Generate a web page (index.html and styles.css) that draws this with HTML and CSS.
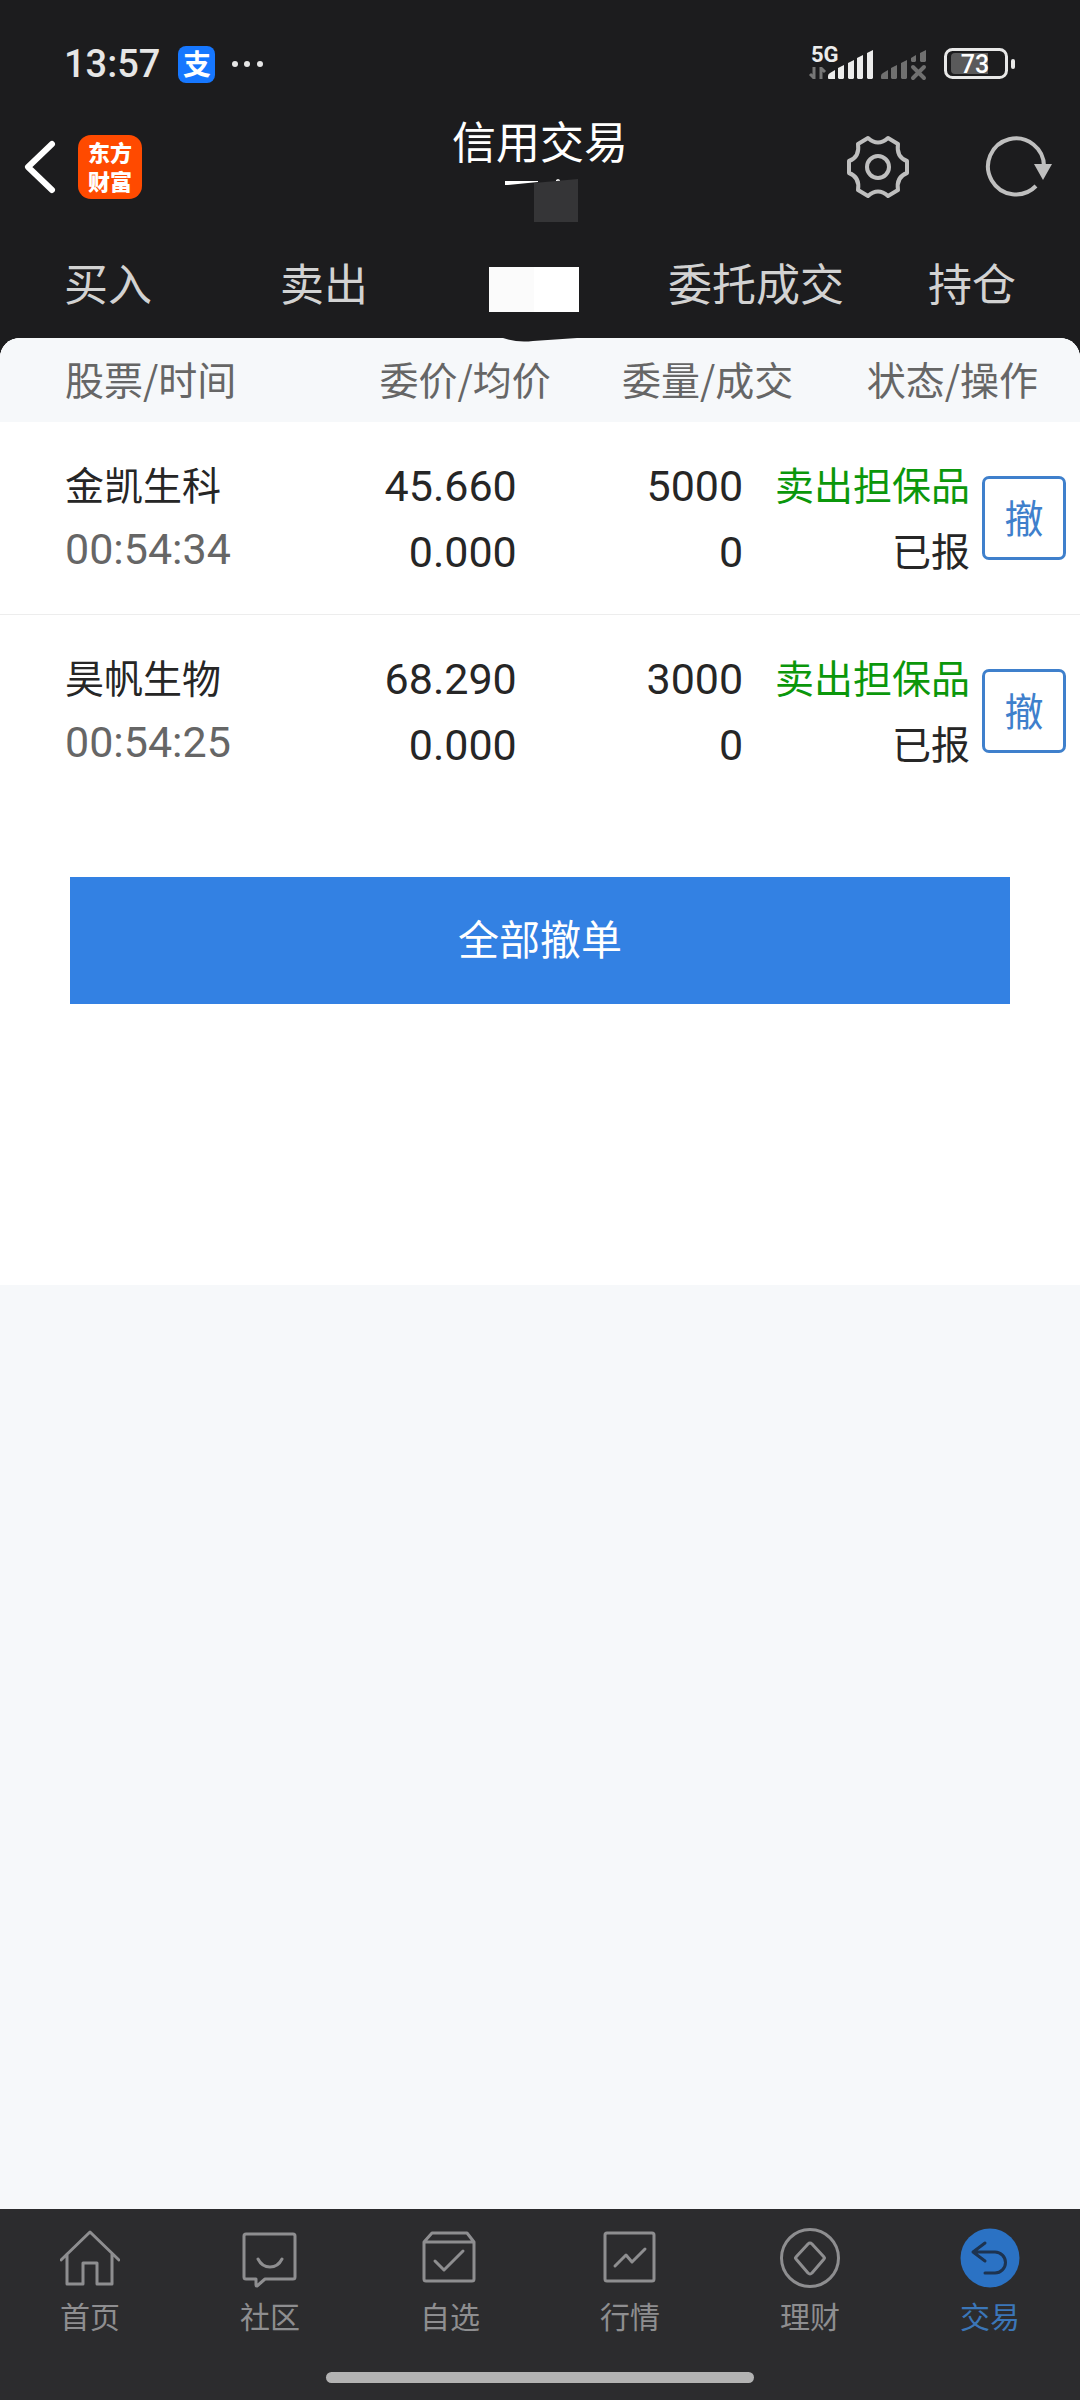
FILE: index.html
```
<!DOCTYPE html>
<html lang="zh">
<head>
  <meta charset="UTF-8">
  <meta name="viewport" content="width=device-width, initial-scale=1">
  <title>信用交易</title>
  <link rel="stylesheet" href="styles.css">
</head>
<body>
<header class="header">
  <div class="status-bar">
    <span class="time">13:57</span>
    <span class="alipay">支</span>
    <svg class="dots" width="32" height="8" viewBox="0 0 32 8" fill="#e6e6e6">
      <circle cx="4" cy="4" r="3"/><circle cx="16" cy="4" r="3"/><circle cx="29" cy="4" r="3"/>
    </svg>
    <svg class="signals" width="210" height="42" viewBox="0 0 210 42">
      <text class="net" x="3" y="19">5G</text>
      <path d="M6 24v12M6 35L2 31M13 36V24M13 25l4 4" fill="none" stroke="#777" stroke-width="3"/>
      <g fill="#ececec">
        <path d="M20 33q0-2 2-3l5-3v9h-6q-1 0-1-1z"/>
        <path d="M30 25l6-3v13l-1 1h-4l-1-1z"/>
        <path d="M40 20l6-3v18l-1 1h-4l-1-1z"/>
        <path d="M49 15l6-3v23l-1 1h-4l-1-1z"/>
        <path d="M59 10l6-3v28l-1 1h-4l-1-1z"/>
      </g>
      <g fill="#707070">
        <path d="M73 33q0-2 2-3l5-3v9h-6q-1 0-1-1z"/>
        <path d="M83 25l6-3v13l-1 1h-4l-1-1z"/>
        <path d="M93 20l6-3v18l-1 1h-4l-1-1z"/>
        <path d="M103 15l5-3v6l-1 1h-3l-1-1z"/>
        <path d="M112 10l6-3v11l-1 1h-4l-1-1z"/>
      </g>
      <path d="M105 24l11 11M116 24l-11 11" stroke="#707070" stroke-width="4" stroke-linecap="round"/>
      <rect x="137.500" y="6.500" width="61" height="28" rx="7" fill="none" stroke="#e8e8e8" stroke-width="3"/>
      <path d="M147 10h33v21h-33q-4 0-4-4v-13q0-4 4-4z" fill="#5a5a5b"/>
      <rect x="203" y="16" width="4" height="10" rx="2" fill="#e8e8e8"/>
      <text class="battery" x="167" y="30">73</text>
    </svg>
  </div>

  <div class="title-bar">
    <div class="left">
      <button class="icon-btn" aria-label="返回">
        <svg width="34" height="56" viewBox="0 0 34 56" fill="none" stroke="#fff" stroke-width="6" stroke-linejoin="round" stroke-linecap="round">
          <path d="M29 5L5 28l24 23"/>
        </svg>
      </button>
      <a class="logo" href="#">东方<br>财富</a>
    </div>
    <div class="title">
      <h1>信用交易</h1>
      <svg width="80" height="48" viewBox="0 0 80 48">
        <path d="M5 5h33v1L8 9H5zM56 4l2-1 2 1v1h-4z" fill="#fff"/>
        <path d="M34 7l44-4v43H34z" fill="#353537"/>
      </svg>
    </div>
    <div class="right">
      <button class="icon-btn" aria-label="设置">
        <svg width="64" height="64" viewBox="0 0 64 64" fill="none" stroke="#bfbfbf" stroke-width="4" stroke-linejoin="round">
          <path d="M22 3Q32 12 42 3L52 9Q50 22 61 26V38Q50 42 52 55L42 61Q32 52 22 61L12 55Q14 42 3 38V26Q14 22 12 9Z"/>
          <circle cx="32" cy="32" r="11"/>
        </svg>
      </button>
      <button class="icon-btn" aria-label="刷新">
        <svg width="70" height="64" viewBox="0 0 70 64" fill="none" stroke="#bfbfbf" stroke-width="4">
          <path d="M60 32A28 28 0 1 0 52 51"/>
          <path d="M50 29h18l-9 16z" fill="#bfbfbf" stroke="none"/>
        </svg>
      </button>
    </div>
  </div>

  <nav class="tabs">
    <a href="#">买入</a>
    <a href="#">卖出</a>
    <a href="#" class="current" aria-label="撤单">
      <svg width="102" height="45" viewBox="0 0 102 45">
        <path d="M0 0h45v45H0z" fill="#fbfbfb"/>
        <path d="M45 0h45v45H45z" fill="#fff"/>
      </svg>
      <svg class="bump" width="74" height="5" viewBox="0 0 74 5">
        <path d="M0 0Q14 5 30 3L74 0z" fill="#1c1c1e"/>
      </svg>
    </a>
    <a href="#">委托成交</a>
    <a href="#">持仓</a>
  </nav>
</header>

<main class="content">
  <section class="orders">
    <table>
      <colgroup>
        <col class="c-name"><col class="c-price"><col class="c-qty"><col class="c-gap"><col class="c-state"><col class="c-action">
      </colgroup>
      <thead>
        <tr>
          <th class="name">股票/时间</th>
          <th>委价/均价</th>
          <th colspan="2" class="amount">委量/成交</th>
          <th colspan="2" class="last">状态/操作</th>
        </tr>
      </thead>
      <tbody>
        <tr>
          <td class="name">金凯生科<span class="num date">00:54:34</span></td>
          <td class="num price">45.660<br>0.000</td>
          <td class="num qty">5000<br>0</td>
          <td colspan="2" class="state"><span class="sell">卖出担保品</span><br>已报</td>
          <td class="action"><button class="cancel">撤</button></td>
        </tr>
        <tr>
          <td class="name">昊帆生物<span class="num date">00:54:25</span></td>
          <td class="num price">68.290<br>0.000</td>
          <td class="num qty">3000<br>0</td>
          <td colspan="2" class="state"><span class="sell">卖出担保品</span><br>已报</td>
          <td class="action"><button class="cancel">撤</button></td>
        </tr>
      </tbody>
    </table>
    <button class="cancel-all">全部撤单</button>
  </section>
</main>

<footer class="footer">
  <nav class="bottom-nav">
    <a href="#">
      <svg viewBox="0 0 60 60"><path d="M1 32L30 4l29 28M7 26v30h16V35h14v21h15V26"/></svg>
      首页
    </a>
    <a href="#">
      <svg viewBox="0 0 60 60"><path d="M6 6h47q2 0 2 2v41q0 2-2 2H25l-8 7q-1 0-1-1v-6H6q-2 0-2-2V8q0-2 2-2zM18 31q4 8 12 8t12-8"/></svg>
      社区
    </a>
    <a href="#">
      <svg viewBox="0 0 60 60"><path d="M4 14h50v37q0 2-2 2H6q-2 0-2-2V14l8-9h35l7 9M15 33l9 9 19-19"/></svg>
      自选
    </a>
    <a href="#">
      <svg viewBox="0 0 60 60"><rect x="5" y="5" width="49" height="48" rx="2"/><path d="M15 38l11-11 6 7 13-13"/></svg>
      行情
    </a>
    <a href="#">
      <svg viewBox="0 0 60 60"><circle cx="30" cy="30" r="28.500"/><path d="M28 16q2-2 4 0l12 13q1 1 0 2L32 45q-2 2-4 0L16 31q-1-1 0-2z"/></svg>
      理财
    </a>
    <a href="#" class="active">
      <svg viewBox="0 0 60 60"><circle cx="30" cy="30" r="29.500" fill="#2b72c4" stroke="none"/><path d="M25 15l-12 9 12 9M13 24h22a10 10 0 0 1 0 21H25" stroke="#1d3350"/></svg>
      交易
    </a>
  </nav>
  <div class="home-bar"></div>
</footer>
</body>
</html>
```
FILE: styles.css
```
* { box-sizing: border-box; }
body { margin: 0; min-height: 100vh; display: flex; flex-direction: column; background: #f6f8fa; font-family: "Noto Sans CJK SC", sans-serif; color: #262626; }
a { text-decoration: none; color: inherit; }
button { font-family: inherit; cursor: pointer; }
svg { display: block; }

.header { background: #1c1c1e; padding-bottom: 20px; }
.status-bar { height: 118px; padding: 10px 62px 0 64px; display: flex; align-items: center; color: #e6e6e6; }
.time { font: 500 38px/48px Roboto, sans-serif; }
.alipay { width: 37px; height: 37px; margin-left: 18px; border-radius: 8px; background: #1677ff; color: #fff; font-size: 28px; font-weight: bold; line-height: 34px; text-align: center; }
.dots { margin-left: 16px; }
.signals { margin-left: auto; }
.net { font: 700 22px Roboto, sans-serif; fill: #ececec; }
.battery { font: 500 25px Roboto, sans-serif; fill: #fff; text-anchor: middle; }

.title-bar { height: 108px; display: grid; grid-template-columns: 1fr auto 1fr; }
.left, .right { display: flex; align-items: center; padding-bottom: 10px; }
.left { padding-left: 23px; gap: 21px; }
.right { justify-content: flex-end; padding-right: 26px; gap: 74px; }
.icon-btn { padding: 0; border: 0; background: none; }
.logo { width: 64px; height: 64px; padding-top: 2px; border-radius: 13px; background: #ff4a00; color: #fff; font-size: 22px; font-weight: 900; line-height: 29px; text-align: center; }
.title h1 { margin: 0 0 14px; font-size: 44px; font-weight: 400; line-height: 44px; color: #fff; }
.title { display: flex; flex-direction: column; align-items: center; }

.tabs { height: 112px; padding: 2px 0; display: grid; grid-template-columns: repeat(5, 1fr); align-items: center; justify-items: center; font-size: 44px; line-height: 108px; color: #d2d2d2; }
.current { position: relative; height: 108px; padding-top: 14px; display: flex; align-items: center; }
.bump { position: absolute; left: 14px; top: 110px; z-index: 1; }

.content { flex: 1; margin-top: -20px; border-radius: 20px 20px 0 0; overflow: hidden; background: #f6f8fa; }
.orders { background: #fff; padding-bottom: 281px; }
table { width: 100%; table-layout: fixed; border-collapse: collapse; font-size: 39px; }
.c-name { width: 28%; }
.c-price { width: 23%; }
.c-qty { width: 18%; }
.c-gap { width: 5%; }
.c-state { width: 16%; }
.c-action { width: 10%; }
th { height: 84px; padding: 0 0 4px; background: #f6f8fa; color: #666; font-weight: 400; line-height: 80px; text-align: right; white-space: nowrap; }
th.amount { padding-right: 6px; }
th.last { padding-right: 42px; }
td { padding: 28px 0 32px; line-height: 66px; text-align: right; vertical-align: top; white-space: nowrap; }
tbody tr:first-child td { border-bottom: 1px solid #ededed; }
th.name, td.name { padding-left: 65px; text-align: left; }
.num { font-family: Roboto, sans-serif; font-size: 43px; }
.date { display: block; color: #666; }
td.num { padding-top: 31px; padding-bottom: 29px; }
td.price { padding-right: 34px; }
td.qty { padding-right: 2px; }
td.state { padding-right: 2px; }
td.action { padding: 0 14px 0 0; vertical-align: middle; }
.sell { color: #0b970b; }
.cancel { display: block; width: 84px; height: 84px; margin-left: auto; padding: 0 0 4px; border: 3px solid #3f80cc; border-radius: 7px; background: #fff; color: #3f80cc; font-size: 39px; line-height: 74px; }
.cancel-all { display: block; width: calc(100% - 140px); height: 127px; margin: 70px 70px 0; padding: 0 0 8px; border: 0; background: #3381e3; color: #fff; font-size: 41px; }

.footer { background: #2c2c2e; padding: 19px 0 17px; }
.bottom-nav { display: grid; grid-template-columns: repeat(6, 1fr); color: #8e8e90; font-size: 30px; line-height: 36px; }
.bottom-nav a { display: flex; flex-direction: column; align-items: center; gap: 9px; }
.bottom-nav svg { width: 60px; height: 60px; fill: none; stroke: currentColor; stroke-width: 3; stroke-linejoin: round; stroke-linecap: round; }
.bottom-nav .active { color: #3b76b8; }
.home-bar { width: 428px; height: 11px; margin: 39px auto 0; border-radius: 6px; background: #b3b3b3; }
```
